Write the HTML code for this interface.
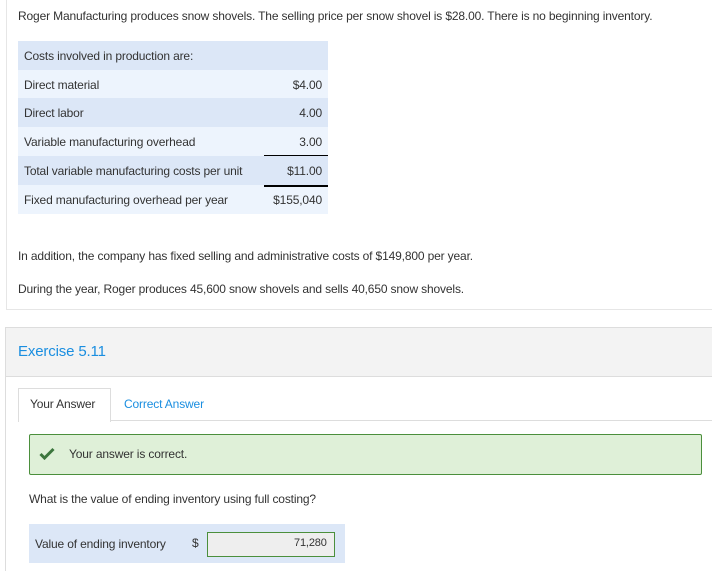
<!DOCTYPE html>
<html><head><style>
body{margin:0;width:712px;height:571px;background:#fff;font-family:"Liberation Sans",sans-serif;font-size:12px;color:#333;position:relative;overflow:hidden;letter-spacing:-0.15px}
.a{position:absolute;white-space:nowrap}
.row{position:absolute;left:18px;width:310px;height:29px}
.row span{position:absolute;top:8px}
.row .l{left:6px}.row .r{right:6px}
</style></head><body>
<div class="a" style="left:6px;top:0;width:1px;height:310px;background:#e6e6e6"></div>
<div class="a" style="left:6px;top:309px;width:706px;height:1px;background:#e6e6e6"></div>
<div class="a" style="left:18px;top:9px">Roger Manufacturing produces snow shovels. The selling price per snow shovel is $28.00. There is no beginning inventory.</div>
<div class="row" style="top:41px;background:#dce7f7"><span class="l">Costs involved in production are:</span></div>
<div class="row" style="top:70px;background:#edf4fd"><span class="l">Direct material</span><span class="r">$4.00</span></div>
<div class="row" style="top:98px;background:#dce7f7"><span class="l">Direct labor</span><span class="r">4.00</span></div>
<div class="row" style="top:127px;background:#edf4fd"><span class="l">Variable manufacturing overhead</span><span class="r">3.00</span></div>
<div class="row" style="top:156px;background:#dce7f7"><span class="l">Total variable manufacturing costs per unit</span><span class="r">$11.00</span></div>
<div class="row" style="top:185px;background:#edf4fd"><span class="l">Fixed manufacturing overhead per year</span><span class="r">$155,040</span></div>
<div class="a" style="left:264px;top:155px;width:64px;height:1px;background:#000"></div>
<div class="a" style="left:264px;top:185px;width:64px;height:2px;background:#000"></div>
<div class="a" style="left:18px;top:249px">In addition, the company has fixed selling and administrative costs of $149,800 per year.</div>
<div class="a" style="left:18px;top:282px">During the year, Roger produces 45,600 snow shovels and sells 40,650 snow shovels.</div>
<div class="a" style="left:5px;top:327px;width:707px;height:48px;background:#f3f3f3;border-top:1px solid #ddd;border-bottom:1px solid #ddd;border-left:1px solid #ddd"></div>
<div class="a" style="left:5px;top:376px;width:1px;height:195px;background:#ddd"></div>
<div class="a" style="left:18px;top:343px;font-size:15px;color:#1a8ee0">Exercise 5.11</div>
<div class="a" style="left:18px;top:420px;width:694px;height:1px;background:#ddd"></div>
<div class="a" style="left:18px;top:388px;width:91px;height:33px;background:#fff;border:1px solid #ddd;border-bottom:none"></div>
<div class="a" style="left:30px;top:397px">Your Answer</div>
<div class="a" style="left:124px;top:397px;color:#1a8ee0">Correct Answer</div>
<div class="a" style="left:29px;top:434px;width:671px;height:39px;background:#dff0d8;border:1px solid #4b8f3c;border-radius:2px"></div>
<svg class="a" style="left:39px;top:447px" width="16" height="13" viewBox="0 0 16 13"><path d="M1.5 7 L5.5 11 L14.5 2" fill="none" stroke="#3c763d" stroke-width="3"/></svg>
<div class="a" style="left:69px;top:447px">Your answer is correct.</div>
<div class="a" style="left:29px;top:492px">What is the value of ending inventory using full costing?</div>
<div class="a" style="left:29px;top:524px;width:316px;height:39px;background:#dce7f7"></div>
<div class="a" style="left:35px;top:537px">Value of ending inventory</div>
<div class="a" style="left:192px;top:536px">$</div>
<div class="a" style="left:207px;top:532px;width:126px;height:23px;background:#eee;border:1px solid #4b8f3c"></div>
<div class="a" style="left:294px;top:537px;font-size:11px">71,280</div>
</body></html>
